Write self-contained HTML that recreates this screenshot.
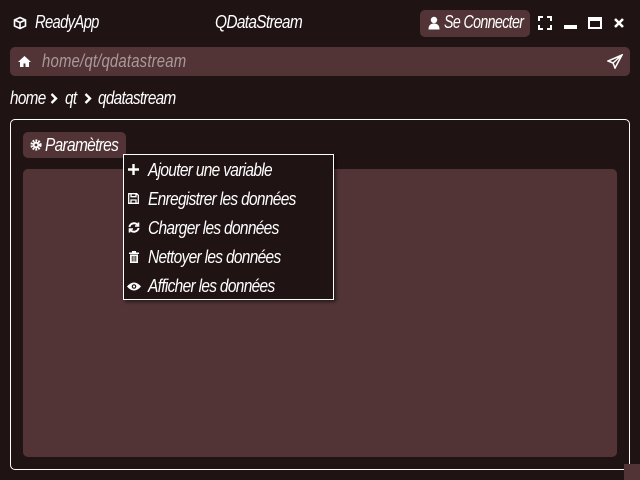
<!DOCTYPE html>
<html><head><meta charset="utf-8"><style>
*{margin:0;padding:0;box-sizing:border-box}
body{width:640px;height:480px;background:#201314;position:relative;overflow:hidden;font-family:"Liberation Sans",sans-serif;font-style:italic;color:#fff}
.a{position:absolute}
.t{font-size:18px;letter-spacing:-0.8px;white-space:nowrap;display:inline-block;transform:scaleX(0.82);transform-origin:left center}
.m{transform:scaleX(0.86)}
svg{position:absolute}
</style></head><body>
<svg style="left:13px;top:16px" width="14" height="14" viewBox="0 0 14 14" fill="none" stroke="#fff" stroke-width="1.6"><path d="M7 1.5L12.5 4v6L7 12.5 1.5 10V4z M1.5 4L7 6.5 12.5 4 M7 6.5v6"/></svg>
<div class="a t" style="left:35px;top:12px">ReadyApp</div>
<div class="a t" style="left:215px;top:12px;transform:scaleX(0.86)">QDataStream</div>
<div class="a" style="left:420px;top:10px;width:110px;height:27px;background:#523436;border-radius:5px"></div>
<svg style="left:428px;top:16px" width="12" height="14" viewBox="0 0 12 14" fill="#fff"><circle cx="6" cy="4" r="3.2"/><path d="M0.5 13.5q0-6 5.5-6t5.5 6z"/></svg>
<div class="a t" style="left:444px;top:12px;transform:scaleX(0.79)">Se Connecter</div>
<svg style="left:538px;top:16px" width="14" height="14" viewBox="0 0 14 14" fill="none" stroke="#fff" stroke-width="2"><path d="M1 5V1h4M9 1h4v4M13 9v4H9M5 13H1V9"/></svg>
<div class="a" style="left:564px;top:25px;width:13px;height:4px;background:#fff"></div>
<div class="a" style="left:588px;top:17px;width:14px;height:12px;border:2px solid #fff;border-top-width:4px"></div>
<svg style="left:614px;top:18px" width="10" height="10" viewBox="0 0 10 10" stroke="#fff" stroke-width="2.6"><path d="M1 1l8 8M9 1L1 9"/></svg>

<div class="a" style="left:10px;top:47px;width:620px;height:29px;background:#523436;border-radius:5px"></div>
<svg style="left:18px;top:56px" width="13" height="11" viewBox="0 0 13 11" fill="#fff"><path d="M6.5 0L0 6h2v5h3.5V7.5h2V11H11V6h2z"/></svg>
<div class="a t" style="left:42px;top:51px;color:#a89a9b;letter-spacing:0.2px;transform:scaleX(0.83)">home/qt/qdatastream</div>
<svg style="left:607px;top:54px" width="16" height="15" viewBox="0 0 16 15" fill="none" stroke="#fff" stroke-width="1.5"><path d="M15 1L1 7l5 2 2 5z M15 1L6 9"/></svg>

<div class="a t" style="left:10px;top:88px;transform:scaleX(0.85)">home</div>
<svg style="left:50px;top:93px" width="8" height="11" viewBox="0 0 8 11" fill="none" stroke="#fff" stroke-width="2.4"><path d="M1.5 1l4.5 4.5L1.5 10"/></svg>
<div class="a t" style="left:65px;top:88px;transform:scaleX(0.85)">qt</div>
<svg style="left:84px;top:93px" width="8" height="11" viewBox="0 0 8 11" fill="none" stroke="#fff" stroke-width="2.4"><path d="M1.5 1l4.5 4.5L1.5 10"/></svg>
<div class="a t" style="left:98px;top:88px;transform:scaleX(0.85)">qdatastream</div>

<div class="a" style="left:10px;top:119px;width:620px;height:351px;border:1px solid #fff;border-radius:5px"></div>
<div class="a" style="left:23px;top:132px;width:103px;height:26px;background:#523436;border-radius:5px"></div>
<svg style="left:30px;top:139px" width="12" height="12" viewBox="0 0 12 12"><circle cx="6" cy="6" r="4.3" fill="none" stroke="#fff" stroke-width="2.6" stroke-dasharray="1.7 1.1"/><circle cx="6" cy="6" r="3.2" fill="#fff"/><circle cx="6" cy="6" r="1.4" fill="#523436"/></svg>
<div class="a t m" style="left:45px;top:135px">Paramètres</div>
<div class="a" style="left:23px;top:169px;width:594px;height:288px;background:#523436;border-radius:5px"></div>
<div class="a" style="left:624px;top:464px;width:16px;height:16px;background:#523436"></div>

<div class="a" style="left:123px;top:154px;width:211px;height:146px;background:#201314;border:1px solid #fff;box-shadow:2px 2px 3px rgba(0,0,0,.5)"></div>
<svg style="left:128px;top:164px" width="11" height="11" viewBox="0 0 11 11" stroke="#fff" stroke-width="2.4"><path d="M5.5 0v11M0 5.5h11"/></svg>
<div class="a t m" style="left:148px;top:160px">Ajouter une variable</div>
<svg style="left:128px;top:193px" width="11" height="11" viewBox="0 0 11 11" fill="none" stroke="#fff" stroke-width="1.3"><path d="M.7.7h8l1.6 1.6v8H.7z M3 .7v3h5v-3 M3 10.3V7h5v3.3"/></svg>
<div class="a t m" style="left:148px;top:189px">Enregistrer les données</div>
<svg style="left:128px;top:222px" width="12" height="11" viewBox="0 0 12 11" fill="none" stroke="#fff" stroke-width="2"><path d="M1.5 5A4.5 4 0 0 1 10 3.5M10.5 6A4.5 4 0 0 1 2 7.5"/><path d="M10.5 .5v3.5H7M1.5 10.5V7H5" stroke-width="1.6"/></svg>
<div class="a t m" style="left:148px;top:218px">Charger les données</div>
<svg style="left:129px;top:251px" width="10" height="12" viewBox="0 0 10 12" fill="#fff"><path d="M0 1.5h10V3H0z M3 0h4v1.5H3z M1 3.5h8V12H1z"/><path d="M3.2 5v5.5M5 5v5.5M6.8 5v5.5" stroke="#201314" stroke-width=".9"/></svg>
<div class="a t m" style="left:148px;top:247px">Nettoyer les données</div>
<svg style="left:127px;top:282px" width="14" height="9" viewBox="0 0 14 9"><path d="M0 4.5Q7-3.5 14 4.5 7 12.5 0 4.5z" fill="#fff"/><circle cx="7" cy="4.5" r="2.3" fill="#201314"/><circle cx="7" cy="4.5" r="1.1" fill="#fff"/></svg>
<div class="a t m" style="left:148px;top:276px">Afficher les données</div>
</body></html>
